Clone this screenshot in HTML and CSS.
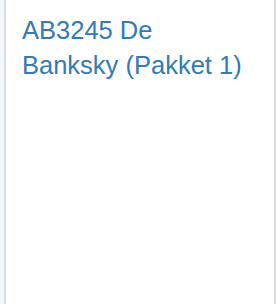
FILE: index.html
```html
<!DOCTYPE html>
<html lang="nl">
<head>
  <meta charset="UTF-8">
  <meta name="viewport" content="width=device-width, initial-scale=1.0">
  <title>Pakket</title>
  <link rel="stylesheet" href="styles.css">
</head>
<body>
  <div class="page">
    <div class="side"></div>
    <div class="panel">
      <a class="title" href="#">AB3245 De Banksky (Pakket 1)</a>
    </div>
    <div class="gutter"></div>
  </div>
</body>
</html>
```

FILE: styles.css
```css
html, body {
  margin: 0;
  height: 100%;
  background-color: #fff;
  font-family: 'Liberation Sans', Arial, sans-serif;
}
.page {
  display: flex;
  height: 100%;
}
.side {
  width: 4px;
  background-color: #f3f6fb;
}
.panel {
  flex: 1;
  border-left: 2px solid #dcdcdc;
  border-right: 2px solid #dcdcdc;
  padding: 13px 26px 13px 16px;
}
.gutter {
  width: 2px;
}
.title {
  display: block;
  font-size: 25.5px;
  line-height: 35px;
  color: #337ab7;
  text-decoration: none;
}
```
